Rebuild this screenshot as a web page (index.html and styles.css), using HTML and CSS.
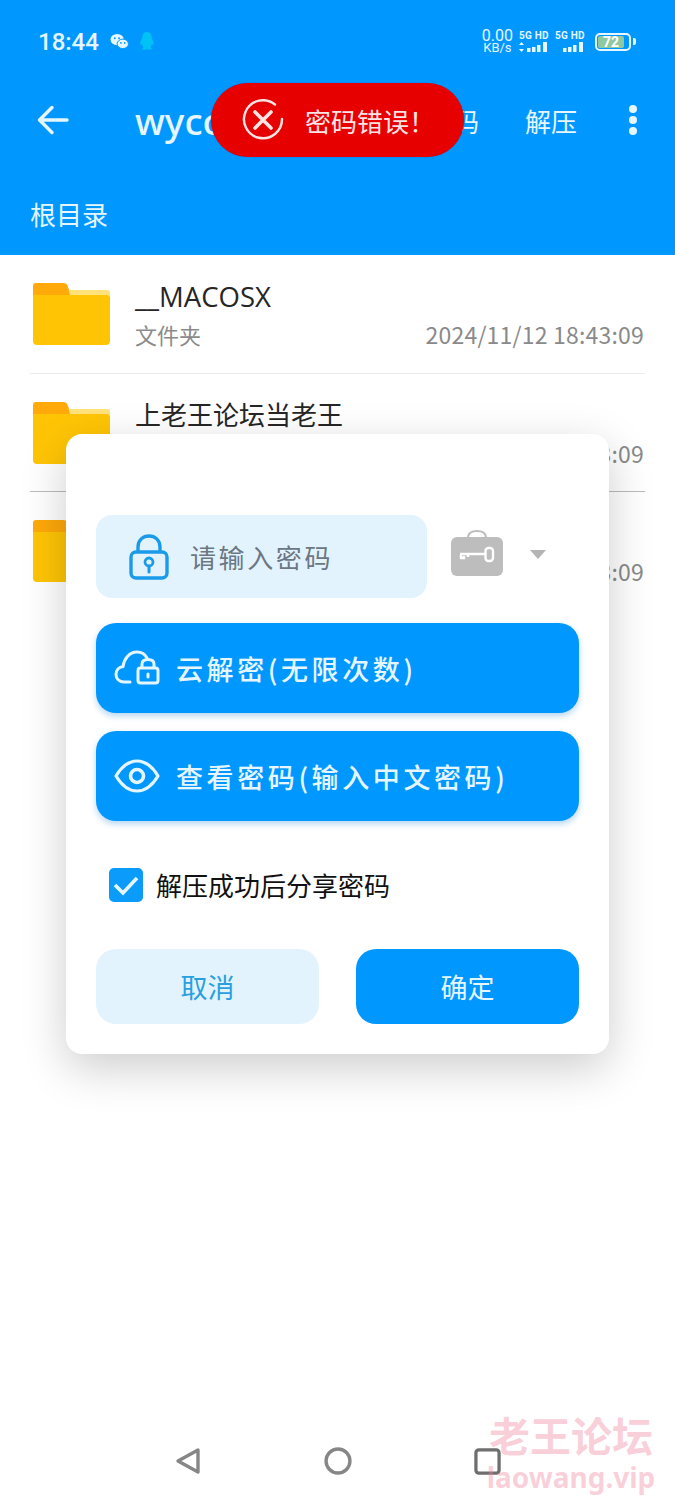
FILE: index.html
```html
<!DOCTYPE html>
<html lang="zh-CN">
<head>
    <meta charset="UTF-8">
    <meta name="viewport" content="width=device-width, initial-scale=1.0">
    <title>解压</title>
    <link rel="stylesheet" href="styles.css">
</head>
<body>
    <div class="screen">
        <header class="top">
            <div class="status">
                <span class="clock">18:44</span>
                <svg class="wechat" viewBox="0 0 20 18" width="19" height="17">
                    <ellipse cx="7.5" cy="7" rx="7" ry="6" fill="#e6f6ff"/>
                    <ellipse cx="13.5" cy="11.5" rx="6" ry="5" fill="#e6f6ff" stroke="#0098ff"/>
                    <circle cx="5" cy="5.5" r="1" fill="#0098ff"/>
                    <circle cx="9.5" cy="5.5" r="1" fill="#0098ff"/>
                    <circle cx="11.5" cy="10.5" r=".9" fill="#0098ff"/>
                    <circle cx="15.5" cy="10.5" r=".9" fill="#0098ff"/>
                </svg>
                <svg class="qq" viewBox="0 0 16 20" width="16" height="19">
                    <path d="M8 0C4 0 3 3.500 3 6.500C2 8.500 .5 11.500 1 13.500C1.800 13.800 2.500 12.800 2.800 12.300C3 14 3.600 15.300 4.500 16C3 16.600 2.500 17.500 3.500 18.300C5 18.900 7 18.500 8 18C9 18.500 11 18.900 12.500 18.300C13.500 17.500 13 16.600 11.500 16C12.400 15.300 13 14 13.200 12.300C13.500 12.800 14.200 13.800 15 13.500C15.500 11.500 14 8.500 13 6.500C13 3.500 12 0 8 0Z" fill="#00c2f5"/>
                </svg>
                <div class="status-right">
                    <div class="speed"><span>0.00</span><span class="speed-unit">KB/s</span></div>
                    <div class="sim">
                        <span class="sim-label">5G HD</span>
                        <svg viewBox="0 0 30 11" width="30" height="11">
                            <path d="M2.500 0L5 3H0ZM2.500 10L0 7H5Z" fill="#e6f6ff"/>
                            <path d="M8 6h3.500v4H8zM13 5h3.500v5H13zM18 3h3.500v7H18zM24 0h4v10h-4z" fill="#e6f6ff"/>
                        </svg>
                    </div>
                    <div class="sim">
                        <span class="sim-label">5G HD</span>
                        <svg viewBox="0 0 30 11" width="30" height="11">
                            <path d="M8 6h3.500v4H8zM13 5h3.500v5H13zM18 3h3.500v7H18zM24 0h4v10h-4z" fill="#e6f6ff"/>
                        </svg>
                    </div>
                    <div class="battery"><span class="battery-level">72</span></div>
                    <span class="battery-tip"></span>
                </div>
            </div>
            <div class="toolbar">
                <svg class="back" viewBox="0 0 32 30" width="32" height="30">
                    <path d="M30 15H3M15 2.500L2.500 15L15 27.500" fill="none" stroke="#e6f6ff" stroke-width="3.400" stroke-linecap="round" stroke-linejoin="round"/>
                </svg>
                <span class="title">wyco</span>
                <span class="action">密码</span>
                <span class="action">解压</span>
                <div class="more"><i></i><i></i><i></i></div>
            </div>
            <div class="crumb">根目录</div>
        </header>

        <main class="list">
            <div class="row">
                <svg class="folder" viewBox="0 0 78 62" width="77" height="62" preserveAspectRatio="none">
                    <path d="M3 0H31C33 0 34.500 1 35 3L37 8H75C77 8 78 9 78 11V20H0V3C0 1 1 0 3 0Z" fill="#ffa90a"/>
                    <path d="M36 7H75C77 7 78 8.500 78 10V14H38Z" fill="#ffe27a"/>
                    <path d="M0 12H35L38 12L74 12C77 12 78 14 78 16V58C78 60.500 76.500 62 74 62H4C1.500 62 0 60.500 0 58Z" fill="#ffc505"/>
                </svg>
                <div class="info">
                    <div class="name name-latin">__MACOSX</div>
                    <div class="meta"><span>文件夹</span><span class="date">2024/11/12 18:43:09</span></div>
                </div>
            </div>
            <div class="row">
                <svg class="folder" viewBox="0 0 78 62" width="77" height="62" preserveAspectRatio="none">
                    <path d="M3 0H31C33 0 34.500 1 35 3L37 8H75C77 8 78 9 78 11V20H0V3C0 1 1 0 3 0Z" fill="#ffa90a"/>
                    <path d="M36 7H75C77 7 78 8.500 78 10V14H38Z" fill="#ffe27a"/>
                    <path d="M0 12H35L38 12L74 12C77 12 78 14 78 16V58C78 60.500 76.500 62 74 62H4C1.500 62 0 60.500 0 58Z" fill="#ffc505"/>
                </svg>
                <div class="info">
                    <div class="name">上老王论坛当老王</div>
                    <div class="meta"><span>文件夹</span><span class="date">2024/11/12 18:43:09</span></div>
                </div>
            </div>
            <div class="row">
                <svg class="folder" viewBox="0 0 78 62" width="77" height="62" preserveAspectRatio="none">
                    <path d="M3 0H31C33 0 34.500 1 35 3L37 8H75C77 8 78 9 78 11V20H0V3C0 1 1 0 3 0Z" fill="#ffa90a"/>
                    <path d="M36 7H75C77 7 78 8.500 78 10V14H38Z" fill="#ffe27a"/>
                    <path d="M0 12H35L38 12L74 12C77 12 78 14 78 16V58C78 60.500 76.500 62 74 62H4C1.500 62 0 60.500 0 58Z" fill="#ffc505"/>
                </svg>
                <div class="info">
                    <div class="name">&nbsp;</div>
                    <div class="meta"><span>文件夹</span><span class="date">2024/11/12 18:43:09</span></div>
                </div>
            </div>
        </main>

        <div class="toast">
            <svg viewBox="0 0 42 42" width="42" height="42">
                <path d="M33 5.500A19 19 0 1 0 40 20" fill="none" stroke="#fbe4e4" stroke-width="2.400" stroke-linecap="round"/>
                <path d="M13 13L29 29M29 13L13 29" fill="none" stroke="#fbe4e4" stroke-width="3.600" stroke-linecap="round"/>
            </svg>
            <span>密码错误！</span>
        </div>

        <div class="dialog">
            <div class="pwd-row">
                <div class="pwd-input">
                    <svg viewBox="0 0 40 46" width="40" height="46">
                        <path d="M9 19V13C9 6 14 2 20 2C26 2 31 6 31 13V19" fill="none" stroke="#1a9be8" stroke-width="3.400"/>
                        <rect x="2" y="18" width="36" height="26" rx="5" fill="none" stroke="#1a9be8" stroke-width="3.400"/>
                        <circle cx="20" cy="28" r="4" fill="none" stroke="#1a9be8" stroke-width="2.800"/>
                        <path d="M20 32V38" stroke="#1a9be8" stroke-width="3" stroke-linecap="round"/>
                    </svg>
                    <span>请输入密码</span>
                </div>
                <svg class="keycase" viewBox="0 0 54 46" width="54" height="46">
                    <path d="M18 7C18.500 3 21 1 27 1C33 1 35.500 3 36 7" fill="none" stroke="#bdbdbd" stroke-width="2"/>
                    <rect x="1" y="7" width="52" height="39" rx="6" fill="#bdbdbd"/>
                    <path d="M10 24H35M11 24V28H14V26M18 24V27" fill="none" stroke="#fff" stroke-width="2.400"/>
                    <rect x="35.500" y="18" width="7.500" height="13" rx="3" fill="none" stroke="#fff" stroke-width="2.400"/>
                </svg>
                <span class="caret"></span>
            </div>

            <button class="btn-wide">
                <svg viewBox="0 0 46 38" width="46" height="38">
                    <path d="M16 33H10C5 33 2 29.500 2 25.500C2 21 5 18 9 17.500C10 10 15 3 23 3C28 3 31 5 33 9" fill="none" stroke="#e6f6ff" stroke-width="3" stroke-linecap="round"/>
                    <rect x="24" y="19" width="20" height="15" rx="2.500" fill="none" stroke="#e6f6ff" stroke-width="3"/>
                    <path d="M28 19V15C28 12 30.500 10.500 34 10.500C37.500 10.500 40 12 40 15V19" fill="none" stroke="#e6f6ff" stroke-width="3"/>
                    <path d="M34 25V28" stroke="#e6f6ff" stroke-width="3" stroke-linecap="round"/>
                </svg>
                <span>云解密(无限次数)</span>
            </button>
            <button class="btn-wide">
                <svg viewBox="0 0 46 36" width="46" height="36">
                    <path d="M2 18C8 8 15 3 23 3C31 3 38 8 44 18C38 28 31 33 23 33C15 33 8 28 2 18Z" fill="none" stroke="#e6f6ff" stroke-width="3.200" stroke-linejoin="round"/>
                    <circle cx="23" cy="18" r="6.500" fill="none" stroke="#e6f6ff" stroke-width="3.600"/>
                </svg>
                <span>查看密码(输入中文密码)</span>
            </button>

            <div class="share">
                <span class="check">
                    <svg viewBox="0 0 34 34" width="34" height="34">
                        <path d="M6 17L14 25L28 10" fill="none" stroke="#e6f6ff" stroke-width="3.600"/>
                    </svg>
                </span>
                <span>解压成功后分享密码</span>
            </div>

            <div class="dialog-btns">
                <button class="btn-cancel">取消</button>
                <button class="btn-ok">确定</button>
            </div>
        </div>

        <nav class="navbar">
            <svg viewBox="0 0 26 28" width="26" height="28">
                <path d="M23 3L3 14L23 25Z" fill="none" stroke="#868686" stroke-width="3.400" stroke-linejoin="round"/>
            </svg>
            <svg viewBox="0 0 30 30" width="28" height="28">
                <circle cx="15" cy="15" r="12.800" fill="none" stroke="#868686" stroke-width="3.600"/>
            </svg>
            <svg viewBox="0 0 28 28" width="27" height="27">
                <rect x="2" y="2" width="24" height="24" rx="3" fill="none" stroke="#6e6e6e" stroke-width="3.400"/>
            </svg>
        </nav>

        <div class="watermark">
            <div class="wm-cn">老王论坛</div>
            <div class="wm-en">laowang.vip</div>
        </div>
    </div>
</body>
</html>
```

FILE: styles.css
```css
/* General Reset */
body {
    font-family: "Noto Sans CJK SC", "Noto Sans", sans-serif;
    margin: 0;
    padding: 0;
    background-color: #fff;
    color: #222;
}

.screen {
    position: relative;
    width: 675px;
    height: 1500px;
    overflow: hidden;
    display: flex;
    flex-direction: column;
}

/* Header Styling */
.top {
    height: 255px;
    background: #0098ff;
    color: #e6f6ff;
}

.status {
    height: 80px;
    box-sizing: border-box;
    display: flex;
    align-items: center;
    padding: 3px 39px 0 38px;
}

.clock {
    font-family: Roboto, sans-serif;
    font-size: 24px;
    font-weight: 500;
}

.wechat {
    margin-left: 11px;
}

.qq {
    margin-left: 10px;
}

.status-right {
    margin-left: auto;
    display: flex;
    align-items: center;
}

.speed {
    font-family: Roboto, sans-serif;
    display: flex;
    flex-direction: column;
    align-items: center;
    font-size: 16px;
    line-height: 12px;
}

.speed-unit {
    font-size: 13px;
}

.sim {
    display: flex;
    flex-direction: column;
    margin-left: 6px;
    width: 33px;
}

.sim + .sim {
    margin-left: 3px;
}

.sim-label {
    font-family: Roboto, sans-serif;
    font-size: 10px;
    line-height: 12px;
    font-weight: 700;
    letter-spacing: .2px;
    white-space: nowrap;
}

.battery {
    margin-left: 7px;
    width: 36px;
    height: 18px;
    box-sizing: border-box;
    border: 2px solid #e6f6ff;
    border-radius: 5px;
    padding: 1px;
}

.battery-level {
    display: block;
    width: 26px;
    height: 12px;
    background: #8fc9a0;
    border-radius: 2px;
    color: #fff;
    font-family: Roboto, sans-serif;
    font-size: 14px;
    font-weight: 700;
    line-height: 12px;
    text-align: center;
}

.battery-tip {
    width: 3px;
    height: 7px;
    margin-left: 2px;
    background: #e6f6ff;
    border-radius: 0 2px 2px 0;
}

.toolbar {
    height: 80px;
    display: flex;
    align-items: center;
    padding-left: 37px;
}

.title {
    font-family: "Noto Sans", sans-serif;
    font-size: 37px;
    font-weight: 500;
    margin-left: 66px;
    width: 292px;
    white-space: nowrap;
}

.action {
    font-size: 26px;
    width: 52px;
    white-space: nowrap;
    margin-right: 46px;
}

.action:nth-of-type(3) {
    margin-right: 0;
}

.more {
    display: flex;
    flex-direction: column;
    gap: 3px;
    margin-left: 52px;
}

.more i {
    display: block;
    width: 8px;
    height: 8px;
    border-radius: 50%;
    background: #e6f6ff;
}

.crumb {
    padding: 36px 0 0 30px;
    font-size: 26px;
    line-height: 36px;
}

/* File List */
.list {
    padding: 0 30px;
}

.row {
    height: 118px;
    box-sizing: border-box;
    display: flex;
    padding-top: 28px;
    border-bottom: 1px solid #ececec;
}

.row:first-child {
    height: 119px;
}

.row:nth-child(2) {
    border-bottom-color: #bbb;
}

.row:last-child {
    border-bottom: none;
}

.folder {
    flex: none;
    margin-left: 3px;
}

.info {
    flex: 1;
    margin: -6px 1px 0 25px;
}

.name {
    font-size: 26px;
    line-height: 36px;
    color: #262626;
}

.name-latin {
    font-family: "Open Sans", sans-serif;
    font-size: 27.500px;
    line-height: 40px;
    margin-bottom: -4px;
}

.meta {
    display: flex;
    justify-content: space-between;
    align-items: baseline;
    margin-top: 5px;
    font-size: 22px;
    line-height: 32px;
    color: #8a8a8a;
}

.date {
    font-size: 23px;
    letter-spacing: .2px;
}

/* Toast */
.toast {
    position: absolute;
    left: 211px;
    top: 83px;
    width: 253px;
    height: 74px;
    box-sizing: border-box;
    padding-left: 31px;
    border-radius: 37px;
    background: #e60000;
    box-shadow: 0 0 1px #5b2f80;
    display: flex;
    align-items: center;
    gap: 21px;
    color: #fbe4e4;
    font-size: 26px;
    white-space: nowrap;
}

/* Dialog */
.dialog {
    position: absolute;
    left: 66px;
    top: 434px;
    width: 543px;
    height: 620px;
    box-sizing: border-box;
    padding: 81px 30px 0;
    background: #fff;
    border-radius: 16px;
    box-shadow: 0 14px 46px rgba(0, 0, 0, .2);
}

.pwd-row {
    display: flex;
    align-items: center;
}

.pwd-input {
    width: 331px;
    height: 83px;
    box-sizing: border-box;
    padding-left: 33px;
    display: flex;
    align-items: center;
    gap: 21px;
    border-radius: 16px;
    background: #e3f3fe;
    color: #6b7783;
    font-size: 26px;
    letter-spacing: 2.600px;
}

.keycase {
    margin: -8px 0 0 23px;
}

.caret {
    margin: -4px 0 0 26px;
    border-left: 8px solid transparent;
    border-right: 8px solid transparent;
    border-top: 9px solid #b4b4b4;
}

.btn-wide {
    display: flex;
    align-items: center;
    gap: 16px;
    width: 483px;
    height: 90px;
    margin-top: 18px;
    padding: 0 0 0 18px;
    border: none;
    border-radius: 20px;
    background: #0098ff;
    box-shadow: 0 3px 6px rgba(0, 120, 210, .3);
    color: #e6f6ff;
    font-family: inherit;
    font-size: 27px;
    font-weight: 500;
    letter-spacing: 3.600px;
}

.pwd-row + .btn-wide {
    margin-top: 25px;
}

.share {
    display: flex;
    align-items: center;
    gap: 13px;
    margin: 46px 0 0 13px;
    color: #111;
    font-size: 26px;
    line-height: 36px;
}

.check {
    width: 34px;
    height: 34px;
    border-radius: 5px;
    background: #0a9bfb;
    display: flex;
}

.dialog-btns {
    display: flex;
    justify-content: space-between;
    margin-top: 46px;
}

.dialog-btns button {
    width: 223px;
    height: 75px;
    border: none;
    border-radius: 20px;
    font-family: inherit;
    font-size: 27px;
}

.btn-cancel {
    background: #e3f3fe;
    color: #2a9fdf;
}

.btn-ok {
    background: #0098ff;
    color: #e6f6ff;
}

/* Bottom Nav */
.navbar {
    position: absolute;
    left: 175px;
    top: 1447px;
    width: 326px;
    display: flex;
    justify-content: space-between;
    align-items: center;
}

/* Watermark */
.watermark {
    position: absolute;
    left: 486px;
    top: 1408px;
    width: 170px;
    text-align: center;
    color: rgba(240, 130, 155, .38);
    font-weight: 700;
    white-space: nowrap;
}

.wm-cn {
    font-size: 41px;
    line-height: 52px;
}

.wm-en {
    font-family: "Noto Sans", sans-serif;
    font-size: 28px;
    line-height: 34px;
}
```
